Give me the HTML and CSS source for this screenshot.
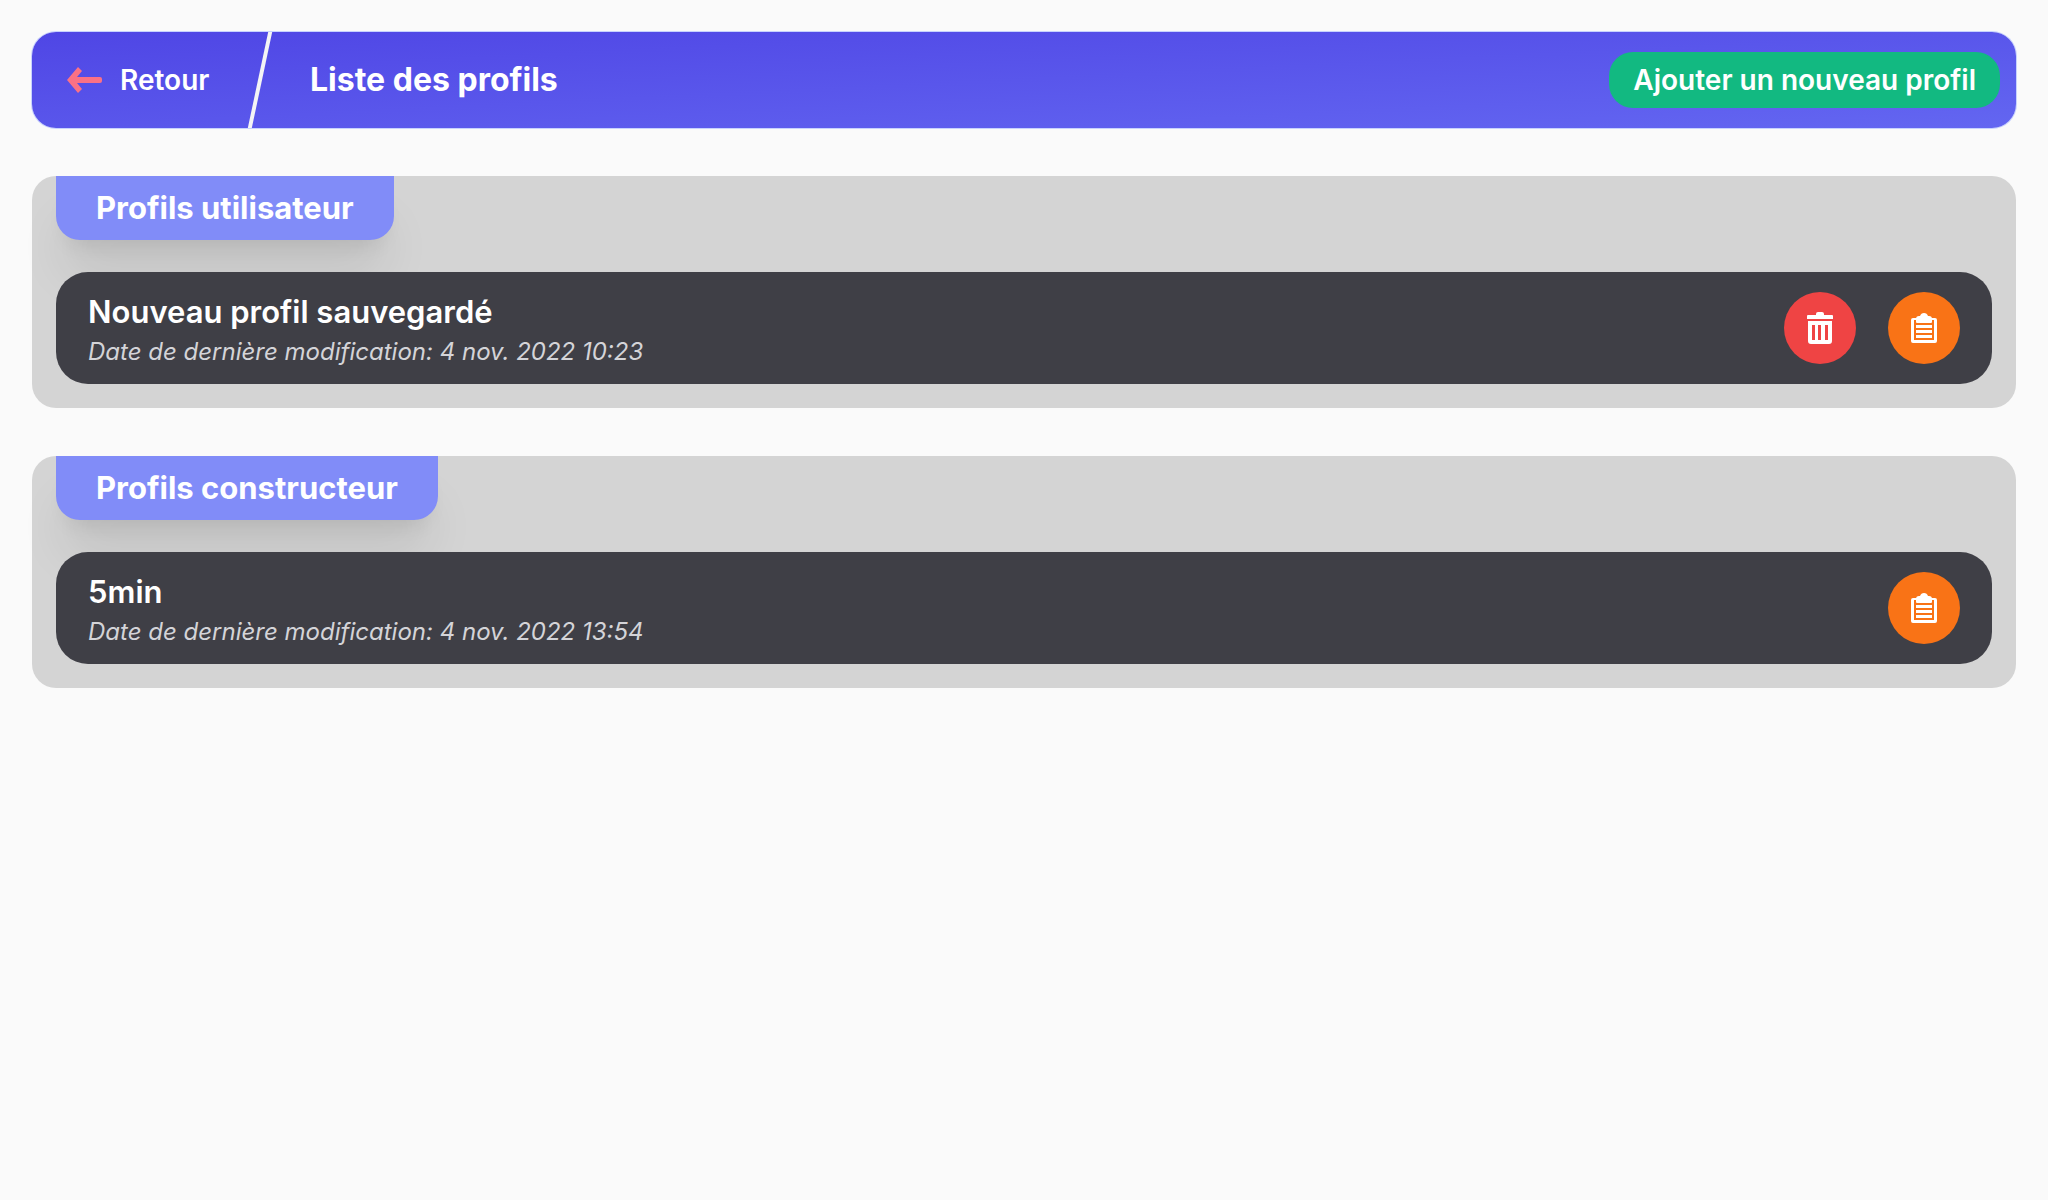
FILE: index.html
```html
<!DOCTYPE html>
<html lang="fr">
<head>
  <meta charset="utf-8">
  <meta name="viewport" content="width=device-width, initial-scale=1">
  <title>Liste des profils</title>
  <link rel="stylesheet" href="styles.css">
</head>
<body>
  <svg class="sprite" aria-hidden="true">
    <symbol id="clipboard" viewBox="0 0 26 30">
      <path fill-rule="evenodd" d="M2 5H24Q26 5 26 7V28Q26 30 24 30H2Q0 30 0 28V7Q0 5 2 5ZM3 7V27H23V7ZM5 12H21V15H5ZM5 17H21V20H5ZM5 22H21V25H5Z"/>
      <path d="M5 9V6Q5 3 8 3H9Q10 0 13 0T17 3H18Q21 3 21 6V9Q21 10 20 10H6Q5 10 5 9Z"/>
    </symbol>
  </svg>
  <header class="topbar">
    <a class="back" href="#">
      <svg class="back-icon" viewBox="0 0 35 26" aria-hidden="true"><path d="M0 13 11 0 15 4 10 10H33Q35 10 35 12V14Q35 16 33 16H10L15 22 11 26Z"/></svg>
      <span>Retour</span>
    </a>
    <h1 class="title">Liste des profils</h1>
    <button class="add" type="button">Ajouter un nouveau profil</button>
  </header>
  <main class="groups">
    <section class="group">
      <h2 class="tab">Profils utilisateur</h2>
      <article class="profile">
        <div class="info">
          <h3 class="name">Nouveau profil sauvegardé</h3>
          <p class="date">Date de dernière modification: 4 nov. 2022 10:23</p>
        </div>
        <button class="action delete" type="button" aria-label="Supprimer">
          <svg class="trash-icon" viewBox="0 0 26 32" aria-hidden="true"><path fill-rule="evenodd" d="M1 3H9V2Q9 0 11 0H15Q17 0 17 2V3H25Q26 3 26 4V7H0V4Q0 3 1 3ZM1 9H25V29Q25 32 22 32H4Q1 32 1 29ZM5 13V28H8V13ZM11 13V28H14V13ZM18 13V28H21V13Z"/></svg>
        </button>
        <button class="action copy" type="button" aria-label="Copier">
          <svg class="clip-icon" aria-hidden="true"><use href="#clipboard"/></svg>
        </button>
      </article>
    </section>
    <section class="group">
      <h2 class="tab">Profils constructeur</h2>
      <article class="profile">
        <div class="info">
          <h3 class="name">5min</h3>
          <p class="date">Date de dernière modification: 4 nov. 2022 13:54</p>
        </div>
        <button class="action copy" type="button" aria-label="Copier">
          <svg class="clip-icon" aria-hidden="true"><use href="#clipboard"/></svg>
        </button>
      </article>
    </section>
  </main>
</body>
</html>
```
FILE: styles.css
```css
* {
  box-sizing: border-box;
  margin: 0;
}

body {
  padding: 32px;
  background: #fafafa;
  color: #fff;
  font-family: Inter, "Liberation Sans", sans-serif;
}

button {
  border: 0;
  font: inherit;
  color: inherit;
  cursor: pointer;
}

svg {
  display: block;
  fill: currentColor;
}

.sprite {
  position: absolute;
  width: 0;
  height: 0;
}

.topbar {
  display: flex;
  align-items: center;
  height: 96px;
  padding-right: 16px;
  overflow: hidden;
  border-radius: 24px;
  background: linear-gradient(to bottom right, #4f46e5, #6366f1);
  box-shadow: 0 0 0 1px #c7d2fe;
}

.back {
  display: flex;
  align-items: center;
  align-self: stretch;
  gap: 18px;
  width: 230px;
  padding-left: 35px;
  border-right: 4px solid #f4f4f5;
  color: inherit;
  font-size: 28px;
  font-weight: 600;
  text-decoration: none;
  transform: skewX(-12deg);
}

.back > * {
  transform: skewX(12deg);
}

.back-icon {
  width: 35px;
  height: 26px;
  color: #fb7185;
}

.title {
  flex: 1;
  padding-left: 48px;
  font-size: 32px;
  font-weight: 700;
  line-height: 40px;
}

.add {
  padding: 8px 24px;
  border-radius: 24px;
  background: #12b981;
  font-size: 28px;
  font-weight: 600;
  line-height: 40px;
}

.groups {
  display: grid;
  gap: 48px;
  margin-top: 48px;
}

.group {
  padding: 0 24px 24px;
  border-radius: 24px;
  background: #d4d4d4;
}

.tab {
  width: fit-content;
  margin-bottom: 32px;
  padding: 12px 40px;
  border-radius: 0 0 24px 24px;
  background: #818cf8;
  box-shadow: 0 40px 50px -10px rgb(0 0 0 / 0.1), 0 16px 20px -12px rgb(0 0 0 / 0.1);
  font-size: 31px;
  font-weight: 700;
  line-height: 40px;
}

.profile {
  position: relative;
  display: flex;
  align-items: center;
  gap: 32px;
  padding: 16px 32px;
  border-radius: 32px;
  background: #3f3f46;
}

.info {
  flex: 1;
  display: grid;
  gap: 8px;
  padding-top: 8px;
}

.name {
  font-size: 31px;
  font-weight: 600;
  line-height: 32px;
}

.date {
  color: #d4d4d8;
  font-size: 24px;
  font-style: italic;
  line-height: 32px;
}

.action {
  display: grid;
  place-items: center;
  width: 72px;
  height: 72px;
  padding: 0;
  border-radius: 50%;
}

.delete {
  background: #ef4444;
}

.copy {
  background: #f97316;
}

.trash-icon {
  width: 26px;
  height: 32px;
}

.clip-icon {
  width: 26px;
  height: 30px;
}
```
